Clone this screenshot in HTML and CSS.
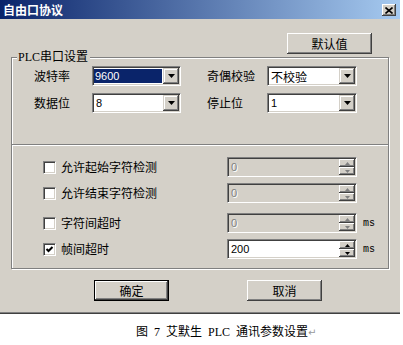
FILE: index.html
```html
<!DOCTYPE html>
<html lang="zh-CN">
<head>
  <meta charset="UTF-8" />
  <title>自由口协议</title>
  <link rel="stylesheet" href="styles.css">
</head>
<body>
  <div class="dialog">
    <div class="titlebar">
      <span class="title">自由口协议</span>
      <span class="close">
        <svg width="8" height="7" viewBox="0 0 8 7"><path d="M0.5 0.5L7.5 6.5M7.5 0.5L0.5 6.5" stroke="#000" stroke-width="1.6"/></svg>
      </span>
    </div>

    <div class="content">
      <div class="top-row">
        <button class="btn btn-wide">默认值</button>
      </div>

      <div class="frame">
        <div class="legend">PLC串口设置</div>
        <div class="port-grid">
          <span class="label">波特率</span>
          <div class="combo">
            <span class="combo-value selected">9600</span>
            <span class="combo-arrow"><svg width="7" height="4" viewBox="0 0 7 4"><path d="M0 0H7L3.5 4Z"/></svg></span>
          </div>
          <span class="label label-right">奇偶校验</span>
          <div class="combo">
            <span class="combo-value cjk">不校验</span>
            <span class="combo-arrow"><svg width="7" height="4" viewBox="0 0 7 4"><path d="M0 0H7L3.5 4Z"/></svg></span>
          </div>

          <span class="label">数据位</span>
          <div class="combo">
            <span class="combo-value">8</span>
            <span class="combo-arrow"><svg width="7" height="4" viewBox="0 0 7 4"><path d="M0 0H7L3.5 4Z"/></svg></span>
          </div>
          <span class="label label-right">停止位</span>
          <div class="combo">
            <span class="combo-value">1</span>
            <span class="combo-arrow"><svg width="7" height="4" viewBox="0 0 7 4"><path d="M0 0H7L3.5 4Z"/></svg></span>
          </div>
        </div>

        <div class="options">
          <div class="opt-row">
            <span class="checkbox"></span>
            <span class="opt-label">允许起始字符检测</span>
            <div class="spinner disabled">
              <span class="spin-value">0</span>
              <span class="spin-buttons">
                <span class="spin-btn"><svg width="5" height="3" viewBox="0 0 5 3"><path d="M0 3H5L2.5 0Z"/></svg></span>
                <span class="spin-btn"><svg width="5" height="3" viewBox="0 0 5 3"><path d="M0 0H5L2.5 3Z"/></svg></span>
              </span>
            </div>
            <span></span>
          </div>
          <div class="opt-row">
            <span class="checkbox"></span>
            <span class="opt-label">允许结束字符检测</span>
            <div class="spinner disabled">
              <span class="spin-value">0</span>
              <span class="spin-buttons">
                <span class="spin-btn"><svg width="5" height="3" viewBox="0 0 5 3"><path d="M0 3H5L2.5 0Z"/></svg></span>
                <span class="spin-btn"><svg width="5" height="3" viewBox="0 0 5 3"><path d="M0 0H5L2.5 3Z"/></svg></span>
              </span>
            </div>
            <span></span>
          </div>
          <div class="opt-row opt-row-spaced">
            <span class="checkbox"></span>
            <span class="opt-label">字符间超时</span>
            <div class="spinner disabled">
              <span class="spin-value">0</span>
              <span class="spin-buttons">
                <span class="spin-btn"><svg width="5" height="3" viewBox="0 0 5 3"><path d="M0 3H5L2.5 0Z"/></svg></span>
                <span class="spin-btn"><svg width="5" height="3" viewBox="0 0 5 3"><path d="M0 0H5L2.5 3Z"/></svg></span>
              </span>
            </div>
            <span class="unit">ms</span>
          </div>
          <div class="opt-row">
            <span class="checkbox">
              <svg width="9" height="9" viewBox="0 0 9 9"><path d="M1.5 4L3.5 6L7.5 2" fill="none" stroke="#000" stroke-width="2"/></svg>
            </span>
            <span class="opt-label">帧间超时</span>
            <div class="spinner">
              <span class="spin-value">200</span>
              <span class="spin-buttons">
                <span class="spin-btn"><svg width="5" height="3" viewBox="0 0 5 3"><path d="M0 3H5L2.5 0Z"/></svg></span>
                <span class="spin-btn"><svg width="5" height="3" viewBox="0 0 5 3"><path d="M0 0H5L2.5 3Z"/></svg></span>
              </span>
            </div>
            <span class="unit">ms</span>
          </div>
        </div>
      </div>

      <div class="actions">
        <button class="btn btn-default">确定</button>
        <button class="btn">取消</button>
      </div>
    </div>
  </div>

  <p class="caption">图 7 艾默生 PLC 通讯参数设置<span class="para">↵</span></p>
</body>
</html>
```

FILE: styles.css
```css
body {
  margin: 0;
  background-color: #fff;
  font-family: "Noto Sans CJK SC", sans-serif;
  font-size: 12px;
  color: #000;
}
.dialog {
  width: 400px;
  background-color: #d4d0c8;
  border-bottom: 1px solid #808080;
  box-shadow: 0 1px 0 #404040;
}
.titlebar {
  height: 19px;
  display: flex;
  align-items: center;
  justify-content: space-between;
  padding: 0 4px 0 3px;
  background: linear-gradient(to right, #0a246a, #a6caf0);
}
.title {
  color: #fff;
  font-weight: bold;
  line-height: 12px;
}
.close {
  width: 14px;
  height: 12px;
  margin-top: 1px;
  display: flex;
  align-items: center;
  justify-content: center;
  background-color: #d4d0c8;
  box-shadow: inset -1px -1px #404040, inset 1px 1px #fff, inset -2px -2px #808080;
}
.content {
  padding: 14px 11px 11px 11px;
}
.top-row {
  display: flex;
  justify-content: flex-end;
  padding-right: 17px;
}
.btn {
  width: 75px;
  height: 21px;
  padding: 0;
  border: none;
  background-color: #d4d0c8;
  font-family: "Noto Sans CJK SC", sans-serif;
  font-size: 12px;
  line-height: 12px;
  color: #000;
  box-sizing: border-box;
  box-shadow: inset -1px -1px #404040, inset 1px 1px #fff, inset -2px -2px #808080, inset 2px 2px #d4d0c8;
}
.btn-wide {
  width: 85px;
}
.btn-default {
  border: 1px solid #000;
}

/* group frame */
.frame {
  margin-top: 3px;
  border: 1px solid #808080;
  box-shadow: inset 1px 1px #fff, 1px 1px #fff;
}
.legend {
  width: max-content;
  height: 12px;
  margin: -7px 0 0 5px;
  padding: 0 2px 0 1px;
  background-color: #d4d0c8;
  font-family: "Liberation Serif", "Noto Sans CJK SC", serif;
  line-height: 12px;
}
.port-grid {
  display: grid;
  grid-template-columns: 58px 89px 86px 90px;
  grid-auto-rows: 20px;
  row-gap: 7px;
  align-items: center;
  padding: 3px 0 31px 22px;
}
.label {
  line-height: 12px;
}
.label-right {
  padding-left: 26px;
}
.combo, .spinner {
  height: 20px;
  box-sizing: border-box;
  display: flex;
  padding: 1px;
  border: 1px solid;
  border-color: #808080 #fff #fff #808080;
  box-shadow: inset 1px 1px #404040, inset -1px -1px #d4d0c8;
  background-color: #fff;
}
.combo-value, .spin-value {
  flex: 1;
  display: flex;
  align-items: center;
  padding-left: 2px;
  font-family: "Liberation Sans", sans-serif;
  font-size: 11px;
}
.combo-value.cjk {
  font-family: "Noto Sans CJK SC", sans-serif;
  font-size: 12px;
}
.combo-value.selected {
  margin: 1px 1px 1px 0;
  padding-left: 1px;
  background-color: #0a246a;
  color: #fff;
}
.combo-arrow {
  width: 16px;
  display: flex;
  align-items: center;
  justify-content: center;
  background-color: #d4d0c8;
  box-shadow: inset -1px -1px #404040, inset 1px 1px #d4d0c8, inset -2px -2px #808080, inset 2px 2px #fff;
}

/* lower options */
.options {
  border-top: 1px solid #808080;
  box-shadow: inset 0 1px #fff;
  padding: 12px 0 9px 31px;
  display: flex;
  flex-direction: column;
  gap: 6px;
}
.opt-row {
  display: grid;
  grid-template-columns: 13px 171px 130px auto;
  height: 20px;
  align-items: center;
}
.opt-row-spaced {
  margin-top: 4px;
}
.checkbox {
  width: 13px;
  height: 13px;
  box-sizing: border-box;
  display: flex;
  align-items: center;
  justify-content: center;
  border: 1px solid;
  border-color: #808080 #fff #fff #808080;
  box-shadow: inset 1px 1px #404040, inset -1px -1px #d4d0c8;
  background-color: #fff;
}
.opt-label {
  padding-left: 5px;
  line-height: 12px;
}
.spinner.disabled {
  background-color: #d4d0c8;
}
.spinner.disabled .spin-value {
  color: #808080;
  text-shadow: 1px 1px #fff;
}
.spin-buttons {
  width: 16px;
  display: flex;
  flex-direction: column;
}
.spin-btn {
  flex: 1;
  display: flex;
  align-items: center;
  justify-content: center;
  background-color: #d4d0c8;
  box-shadow: inset -1px -1px #404040, inset 1px 1px #fff, inset -2px -2px #808080;
}
.spinner.disabled .spin-btn svg {
  fill: #808080;
}
.unit {
  padding-left: 6px;
  font-family: "Liberation Mono", monospace;
  font-size: 10px;
}

.actions {
  display: flex;
  gap: 78px;
  margin-top: 11px;
  padding-left: 83px;
}

.caption {
  margin: 13px 0 0 0;
  padding-left: 136px;
  line-height: 12px;
  font-family: "Liberation Serif", "Noto Sans CJK SC", serif;
  font-size: 12px;
  word-spacing: 3px;
}
.para {
  color: #999;
  font-family: "DejaVu Sans", sans-serif;
  font-size: 10px;
}
```
